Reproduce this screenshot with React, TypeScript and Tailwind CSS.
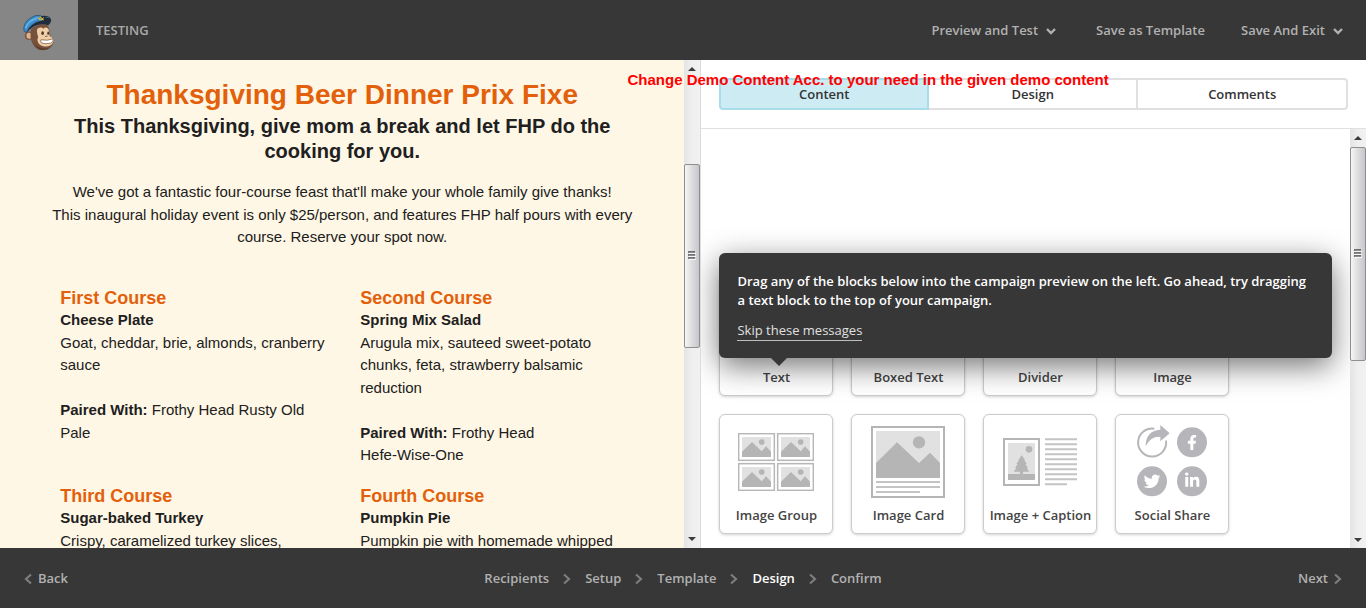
import type { ReactNode } from "react";
import { FaFacebookF, FaLinkedinIn, FaTwitter } from "react-icons/fa";

function Mascot() {
  return (
    <svg viewBox="69 39 99 112" className="h-[37px] w-[33px]" aria-hidden="true">
      <ellipse cx="86" cy="105" rx="12" ry="13" fill="#7a5640" />
      <ellipse cx="87" cy="105" rx="8" ry="9" fill="#e0b48c" />
      <path d="M93 84 Q120 62 144 74 Q151 92 152 106 Q162 112 162 124 Q156 147 130 149 Q108 149 97 128 Q88 112 93 84Z" fill="#76513b" />
      <path d="M112 84 Q124 76 130 84 Q138 76 145 84 Q150 94 149 106 Q162 110 161 122 Q155 138 134 137 Q115 136 112 118 Q117 108 112 100 Q109 90 112 84Z" fill="#f0cfa8" />
      <path d="M104 128 Q118 147 150 141 Q138 151 120 147 Q109 142 104 128Z" fill="#5c3e2d" />
      <ellipse cx="128" cy="97" rx="4" ry="5.5" fill="#4a362b" />
      <ellipse cx="145" cy="97" rx="3" ry="5" fill="#4a362b" />
      <path d="M136 107 L142 106" stroke="#76513b" strokeWidth="2.5" strokeLinecap="round" />
      <path d="M123 117 Q143 121 160 114 Q162 124 153 127 Q137 131 125 127 Q120 122 123 117Z" fill="#fff" stroke="#684633" strokeWidth="2" />
      <path d="M71 86 Q70 66 90 52 Q104 41 121 43 L127 58 Q96 64 79 95 Q71 94 71 86Z" fill="#3b8fd0" stroke="#22435f" strokeWidth="2" />
      <path d="M76 82 Q83 60 112 51" fill="none" stroke="#69b3e6" strokeWidth="5" />
      <path d="M79 95 Q90 66 126 58 L122 45 Q151 42 154 58 Q153 67 145 73 Q110 61 79 95Z" fill="#202c3c" />
      <path d="M87 80 Q104 58 132 58 M136 48 L148 51" fill="none" stroke="#4778a3" strokeWidth="2" />
      <path d="M112 49 L118 54 L122 47 L126 54 L132 50 M117 57 L131 55" fill="none" stroke="#e2ba35" strokeWidth="3" />
    </svg>
  );
}

function ChevronDown() {
  return (
    <svg viewBox="0 0 18 18" className="size-[18px]" aria-hidden="true">
      <path d="M5 7 L9 11 L13 7" fill="none" stroke="currentColor" strokeWidth="2.4" />
    </svg>
  );
}

function Chevron({ left = false }: { left?: boolean }) {
  return (
    <svg viewBox="0 0 8 12" className="h-3 w-2 text-[#7d7d7d]" aria-hidden="true">
      <path d={left ? "M7 1.5 L2 6 L7 10.5" : "M1 1.5 L6 6 L1 10.5"} fill="none" stroke="currentColor" strokeWidth="2.2" />
    </svg>
  );
}

function Arrow({ up = false }: { up?: boolean }) {
  return (
    <span className="flex h-[17px] shrink-0 items-center justify-center">
      <svg viewBox="0 0 8 4" className="h-1 w-2" aria-hidden="true">
        <path d={up ? "M0 4 L4 0 L8 4Z" : "M0 0 L4 4 L8 0Z"} fill="#3c3c3c" />
      </svg>
    </span>
  );
}

function Scrollbar({ before, thumb, after }: { before: number; thumb: number; after: number }) {
  return (
    <div className="flex w-4 shrink-0 flex-col bg-linear-to-r from-[#e4e4e4] via-[#efefef] to-[#f1f1f1]" aria-hidden="true">
      <Arrow up />
      <div style={{ flexGrow: before }} />
      <div
        className="flex basis-0 items-center justify-center rounded-[2px] border border-[#8e8e8e] bg-linear-to-r from-[#f6f6f6] via-[#dcdcde] to-[#c6c7cb]"
        style={{ flexGrow: thumb }}
      >
        <svg viewBox="0 0 8 9" className="h-[9px] w-2">
          <path d="M0 1H7M0 4H7M0 7H7" stroke="#4d4d4d" strokeWidth="1.4" />
          <path d="M1 2.3H8M1 5.3H8M1 8.3H8" stroke="#fff" strokeWidth="1" />
        </svg>
      </div>
      <div style={{ flexGrow: after }} />
      <Arrow />
    </div>
  );
}

function Thumbnail({ x, y }: { x: number; y: number }) {
  return (
    <g transform={`translate(${x} ${y})`}>
      <rect x="2" y="2" width="107" height="80" fill="#fff" stroke="#b7b7b7" strokeWidth="4.5" />
      <rect x="12" y="12" width="87" height="60" fill="#e1e1e1" />
      <circle cx="71" cy="27" r="8.5" fill="#b5b5b5" />
      <path d="M12 72 V56 L42 27 L71 55 L84 40 L99 56 V72Z" fill="#b5b5b5" />
    </g>
  );
}

function ImageGroupIcon() {
  return (
    <svg viewBox="0 0 228 174" className="h-[58px] w-[76px]" aria-hidden="true">
      <Thumbnail x={0} y={0} />
      <Thumbnail x={117} y={0} />
      <Thumbnail x={0} y={90} />
      <Thumbnail x={117} y={90} />
    </svg>
  );
}

function ImageCardIcon() {
  return (
    <svg viewBox="0 0 222 216" className="h-[72px] w-[74px]" aria-hidden="true">
      <rect x="3" y="3" width="216" height="210" fill="#fff" stroke="#b5b5b5" strokeWidth="6" />
      <rect x="15" y="15" width="192" height="141" fill="#e1e1e1" />
      <circle cx="144" cy="49" r="18.5" fill="#b5b5b5" />
      <path d="M15 156 V111 L78 49 L144 111 L177 80 L207 111 V156Z" fill="#b5b5b5" />
      <path d="M15 168H207M15 183H207M15 198H147" stroke="#c4c4c4" strokeWidth="6" />
    </svg>
  );
}

function ImageCaptionIcon() {
  return (
    <svg viewBox="0 0 222 144" className="h-12 w-[74px]" aria-hidden="true">
      <rect x="3" y="3" width="105" height="138" fill="#fff" stroke="#b5b5b5" strokeWidth="6" />
      <rect x="15" y="15" width="81" height="111" fill="#e1e1e1" />
      <circle cx="78" cy="34" r="10" fill="#b5b5b5" />
      <path d="M15 126V108H51V101H32L40 90H36L44 78H40L48 66H46L56 52L66 66H64L71 78H67L75 90H71L79 101H60V108H96V126Z" fill="#b5b5b5" />
      <path
        d="M126 4H222M126 19H222M126 34H222M126 49H222M126 64H222M126 79H222M126 94H222M126 109H222M126 124H222M126 139H192"
        stroke="#c4c4c4"
        strokeWidth="6"
      />
    </svg>
  );
}

function SocialIcon() {
  return (
    <svg viewBox="0 3 210 216" className="h-[72px] w-[70px] overflow-visible" aria-hidden="true">
      <g fill="#b5b5ba">
        <circle cx="165" cy="52" r="45" />
        <circle cx="45" cy="169" r="45" />
        <circle cx="165" cy="169" r="45" />
        <path d="M70 0 L98 25 L70 49 V35 Q40 33 26 64 Q26 17 70 14Z" />
      </g>
      <path d="M52 11 A42 42 0 1 0 87 47" fill="none" stroke="#b5b5ba" strokeWidth="6" />
      <FaFacebookF x={142} y={30} size={46} color="#fff" />
      <FaTwitter x={20} y={144} size={50} color="#fff" />
      <FaLinkedinIn x={141} y={142} size={49} color="#fff" />
    </svg>
  );
}

const blocks: { label: string; icon?: ReactNode }[] = [
  { label: "Text" },
  { label: "Boxed Text" },
  { label: "Divider" },
  { label: "Image" },
  { label: "Image Group", icon: <ImageGroupIcon /> },
  { label: "Image Card", icon: <ImageCardIcon /> },
  { label: "Image + Caption", icon: <ImageCaptionIcon /> },
  { label: "Social Share", icon: <SocialIcon /> },
];

function Course({ title, dish, children }: { title: string; dish: string; children: ReactNode }) {
  return (
    <section>
      <h3 className="text-lg leading-tight font-bold text-[#e3600b]">{title}</h3>
      <h4 className="font-bold">{dish}</h4>
      <div className="-mr-2">{children}</div>
    </section>
  );
}

function Preview() {
  return (
    <article className="min-w-0 flex-1 overflow-hidden bg-[#fff7e5] px-6 pt-4 font-['Liberation_Sans',Arial,sans-serif] text-[15px] leading-normal font-normal text-[#202020]">
      <div className="mx-auto max-w-[564px]">
        <header className="text-center">
          <h1 className="text-[28px] leading-[38px] font-bold text-[#e3600b]">Thanksgiving Beer Dinner Prix Fixe</h1>
          <h2 className="text-xl leading-[25px] font-bold">This Thanksgiving, give mom a break and let FHP do the cooking for you.</h2>
          <p className="-mx-3 mt-[17px]">
            We've got a fantastic four-course feast that'll make your whole family give thanks!
            <br />
            This inaugural holiday event is only $25/person, and features FHP half pours with every course. Reserve your spot now.
          </p>
        </header>
        <div className="mt-[38px] grid grid-cols-2 gap-x-9 gap-y-[18px]">
          <Course title="First Course" dish="Cheese Plate">
            <p>Goat, cheddar, brie, almonds, cranberry sauce</p>
            <br />
            <p>
              <strong>Paired With:</strong> Frothy Head Rusty Old Pale
            </p>
          </Course>
          <Course title="Second Course" dish="Spring Mix Salad">
            <p>Arugula mix, sauteed sweet-potato chunks, feta, strawberry balsamic reduction</p>
            <br />
            <p>
              <strong>Paired With:</strong> Frothy Head <span className="whitespace-nowrap">Hefe-Wise-One</span>
            </p>
          </Course>
          <Course title="Third Course" dish="Sugar-baked Turkey">
            <p>Crispy, caramelized turkey slices,</p>
          </Course>
          <Course title="Fourth Course" dish="Pumpkin Pie">
            <p>Pumpkin pie with homemade whipped</p>
          </Course>
        </div>
      </div>
    </article>
  );
}

function Editor() {
  return (
    <section className="relative flex min-w-0 flex-[665] flex-col bg-white">
      <p className="absolute top-[9px] -left-[74px] z-10 font-['Liberation_Sans',Arial,sans-serif] text-[15px] leading-[22px] font-bold whitespace-nowrap text-[#fe0000]">
        Change Demo Content Acc. to your need in the given demo content
      </p>
      <div className="border-b border-[#e0e0e0] p-[18px]">
        <div className="grid h-8 grid-cols-3 text-[#333]">
          <button className="rounded-l-[4px] border-2 border-[#aadcea] bg-[#cdebf3] pt-0.5">Content</button>
          <button className="border-y-2 border-r-2 border-[#e0e0e0] pt-0.5">Design</button>
          <button className="rounded-r-[4px] border-y-2 border-r-2 border-[#e0e0e0] pt-0.5">Comments</button>
        </div>
      </div>
      <div className="flex min-h-0 flex-1">
        <div className="min-w-0 flex-1 overflow-hidden px-[18px] pt-[147px]">
          <div className="relative flex flex-wrap gap-[18px]">
            {blocks.map(({ label, icon }) => (
              <button
                key={label}
                className="flex h-[120px] w-[114px] flex-col items-center rounded-md border border-[#cccccc] bg-white text-[#444] shadow-[0_1px_3px_rgba(0,0,0,0.18)]"
              >
                <span className="flex h-[90px] items-center pt-1">{icon}</span>
                <span className="leading-5 whitespace-nowrap">{label}</span>
              </button>
            ))}
            <div
              role="status"
              className="absolute inset-x-0 -top-[23px] rounded-md bg-[#373737] px-[18px] pt-[19px] pb-[17px] leading-[19px] text-white shadow-[0_8px_30px_rgba(0,0,0,0.55)]"
            >
              <p>Drag any of the blocks below into the campaign preview on the left. Go ahead, try dragging a text block to the top of your campaign.</p>
              <a href="#skip" className="mt-[11px] inline-block border-b border-[#bdbdbd] leading-[19px] font-normal text-[#e0e0e0]">
                Skip these messages
              </a>
              <svg viewBox="0 0 16 8" className="absolute top-full left-[52px] h-2 w-4" aria-hidden="true">
                <path d="M0 0H16L8 8Z" fill="#373737" />
              </svg>
            </div>
          </div>
        </div>
        <Scrollbar before={1} thumb={213} after={171} />
      </div>
    </section>
  );
}

const steps = ["Recipients", "Setup", "Template", "Design", "Confirm"];

export default function App() {
  return (
    <div className="flex h-screen flex-col overflow-hidden font-['Open_Sans',sans-serif] text-[13px] font-semibold">
      <header className="flex h-[60px] shrink-0 items-center bg-[#373737] text-[#b1b1b1]">
        <a href="#home" aria-label="Home" className="flex h-full w-[78px] items-center justify-center bg-[#868686] pt-1">
          <Mascot />
        </a>
        <span className="ml-[18px] pt-0.5 text-[#a9a9a9]">TESTING</span>
        <nav className="ml-auto flex gap-9 pt-0.5 pr-[19px]">
          <button className="flex items-center gap-1">
            Preview and Test
            <ChevronDown />
          </button>
          <button>Save as Template</button>
          <button className="flex items-center gap-1">
            Save And Exit
            <ChevronDown />
          </button>
        </nav>
      </header>
      <main className="flex min-h-0 flex-1">
        <div className="flex min-w-0 flex-[701] border-r border-[#dcdcdc]">
          <Preview />
          <Scrollbar before={87} thumb={183} after={184} />
        </div>
        <Editor />
      </main>
      <footer className="grid h-[60px] shrink-0 grid-cols-[1fr_auto_1fr] items-center bg-[#373737] px-6 pt-0.5 text-[#b1b1b1]">
        <a href="#back" className="flex items-center gap-1.5 justify-self-start">
          <Chevron left />
          Back
        </a>
        <nav className="flex items-center gap-3.5">
          {steps.map((step, i) => (
            <span key={step} className="flex items-center gap-3.5">
              {i > 0 && <Chevron />}
              <a href={`#${step.toLowerCase()}`} className={step === "Design" ? "text-white" : ""}>
                {step}
              </a>
            </span>
          ))}
        </nav>
        <a href="#next" className="flex items-center gap-1.5 justify-self-end">
          Next
          <Chevron />
        </a>
      </footer>
    </div>
  );
}
